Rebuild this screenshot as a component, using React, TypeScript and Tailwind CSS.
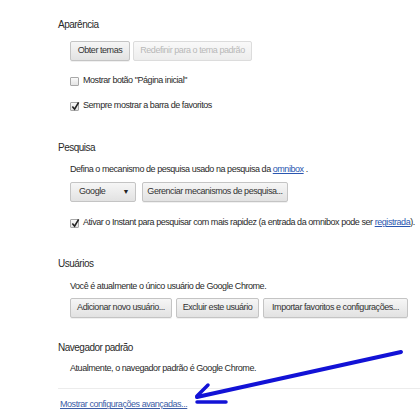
import React from 'react';

const font = { fontFamily: '"Liberation Sans", Arial, sans-serif' };

// Small Chrome-style push button
const Btn: React.FC<{ label: string; w: string; disabled?: boolean }> = ({ label, w, disabled }) => (
  <div
    className={`${w} h-[20px] flex items-center justify-center whitespace-nowrap rounded-[2px] border text-[9px] tracking-[-0.45px] bg-gradient-to-b ${
      disabled
        ? 'border-[#dcdcdc] text-[#b8b8b8] from-[#f9f9f9] to-[#ededed]'
        : 'border-[#c4c4c4] text-[#333] from-[#f6f6f6] to-[#e2e2e2] shadow-[0_1px_0_rgba(0,0,0,0.06)]'
    }`}
  >
    {label}
  </div>
);

const Check: React.FC<{ checked?: boolean; children: React.ReactNode }> = ({ checked, children }) => (
  <div className="h-[18px] flex items-center pl-[12px] text-[9px] tracking-[-0.45px] text-[#2a2a2a] whitespace-nowrap">
    <span className="relative w-[9px] h-[9px] border border-[#a8a8a8] bg-gradient-to-b from-[#fafafa] to-[#e4e4e4] rounded-[1px] mr-[4px] shrink-0">
      {checked && (
        <svg viewBox="0 0 10 10" className="absolute left-[0px] top-[-2px] w-[9px] h-[10px]">
          <path d="M1.5 5.5 L4 8.5 L8.5 1" fill="none" stroke="#222" strokeWidth="1.8" />
        </svg>
      )}
    </span>
    {children}
  </div>
);

const Heading: React.FC<{ children: React.ReactNode; mt: string }> = ({ children, mt }) => (
  <div className={`${mt} h-[18px] flex items-center text-[10px] tracking-[-0.5px] text-[#2a2a2a]`}>{children}</div>
);

const Line: React.FC<{ children: React.ReactNode; mt: string }> = ({ children, mt }) => (
  <div className={`${mt} h-[18px] flex items-center pl-[12px] text-[9px] tracking-[-0.45px] text-[#2a2a2a] whitespace-nowrap`}>
    {children}
  </div>
);

export default function App() {
  return (
    <div className="relative w-[420px] h-[420px] bg-white overflow-hidden" style={font}>
      <div className="flex flex-col pl-[58px] pt-[15px]">
        {/* Aparência */}
        <Heading mt="mt-0">Aparência</Heading>
        <div className="mt-[8px] pl-[12px] flex gap-[3px]">
          <Btn label="Obter temas" w="w-[60px]" />
          <Btn label="Redefinir para o tema padrão" w="w-[119px]" disabled />
        </div>
        <div className="mt-[11px]">
          <Check>Mostrar botão "Página inicial"</Check>
        </div>
        <div className="mt-[7px]">
          <Check checked>Sempre mostrar a barra de favoritos</Check>
        </div>

        {/* Pesquisa */}
        <Heading mt="mt-[23px]">Pesquisa</Heading>
        <Line mt="mt-[5px]">
          Defina o mecanismo de pesquisa usado na pesquisa da&nbsp;
          <span className="text-[#2a56b0] underline">omnibox</span>&nbsp;.
        </Line>
        <div className="mt-[3px] pl-[12px] flex gap-[6px]">
          <div className="w-[66px] h-[20px] flex items-center justify-between pl-[8px] pr-[6px] rounded-[2px] border border-[#c4c4c4] bg-gradient-to-b from-[#f6f6f6] to-[#e2e2e2] text-[9px] tracking-[-0.45px] text-[#333]">
            <span>Google</span>
            <span className="text-[7px] text-[#222]">▼</span>
          </div>
          <Btn label="Gerenciar mecanismos de pesquisa..." w="w-[146px]" />
        </div>
        <div className="mt-[12px]">
          <Check checked>
            Ativar o Instant para pesquisar com mais rapidez (a entrada da omnibox pode ser&nbsp;
            <span className="text-[#2a56b0] underline">registrada</span>).
          </Check>
        </div>

        {/* Usuários */}
        <Heading mt="mt-[22px]">Usuários</Heading>
        <Line mt="mt-[6px]">Você é atualmente o único usuário de Google Chrome.</Line>
        <div className="mt-[2px] pl-[12px] flex gap-[4px]">
          <Btn label="Adicionar novo usuário..." w="w-[102px]" />
          <Btn label="Excluir este usuário" w="w-[83px]" />
          <Btn label="Importar favoritos e configurações..." w="w-[145px]" />
        </div>

        {/* Navegador padrão */}
        <Heading mt="mt-[20px]">Navegador padrão</Heading>
        <Line mt="mt-[4px]">Atualmente, o navegador padrão é Google Chrome.</Line>
        <div className="mt-[10px] border-t border-[#ececec]" />
        <div className="mt-[7px] h-[18px] flex items-center pl-[2px] text-[9px] tracking-[-0.45px] text-[#3d5da6] underline whitespace-nowrap">
          Mostrar configurações avançadas...
        </div>
      </div>

      {/* hand-drawn arrow annotation */}
      <svg className="absolute inset-0 pointer-events-none" width="420" height="420" viewBox="0 0 420 420">
        <path d="M401 352 L197 397" stroke="#1212d6" strokeWidth="4" strokeLinecap="round" fill="none" />
        <path d="M197 396 L208 385" stroke="#1212d6" strokeWidth="3.5" strokeLinecap="round" fill="none" />
        <path d="M197 402 L226 402" stroke="#1212d6" strokeWidth="3.5" strokeLinecap="round" fill="none" />
      </svg>
    </div>
  );
}
